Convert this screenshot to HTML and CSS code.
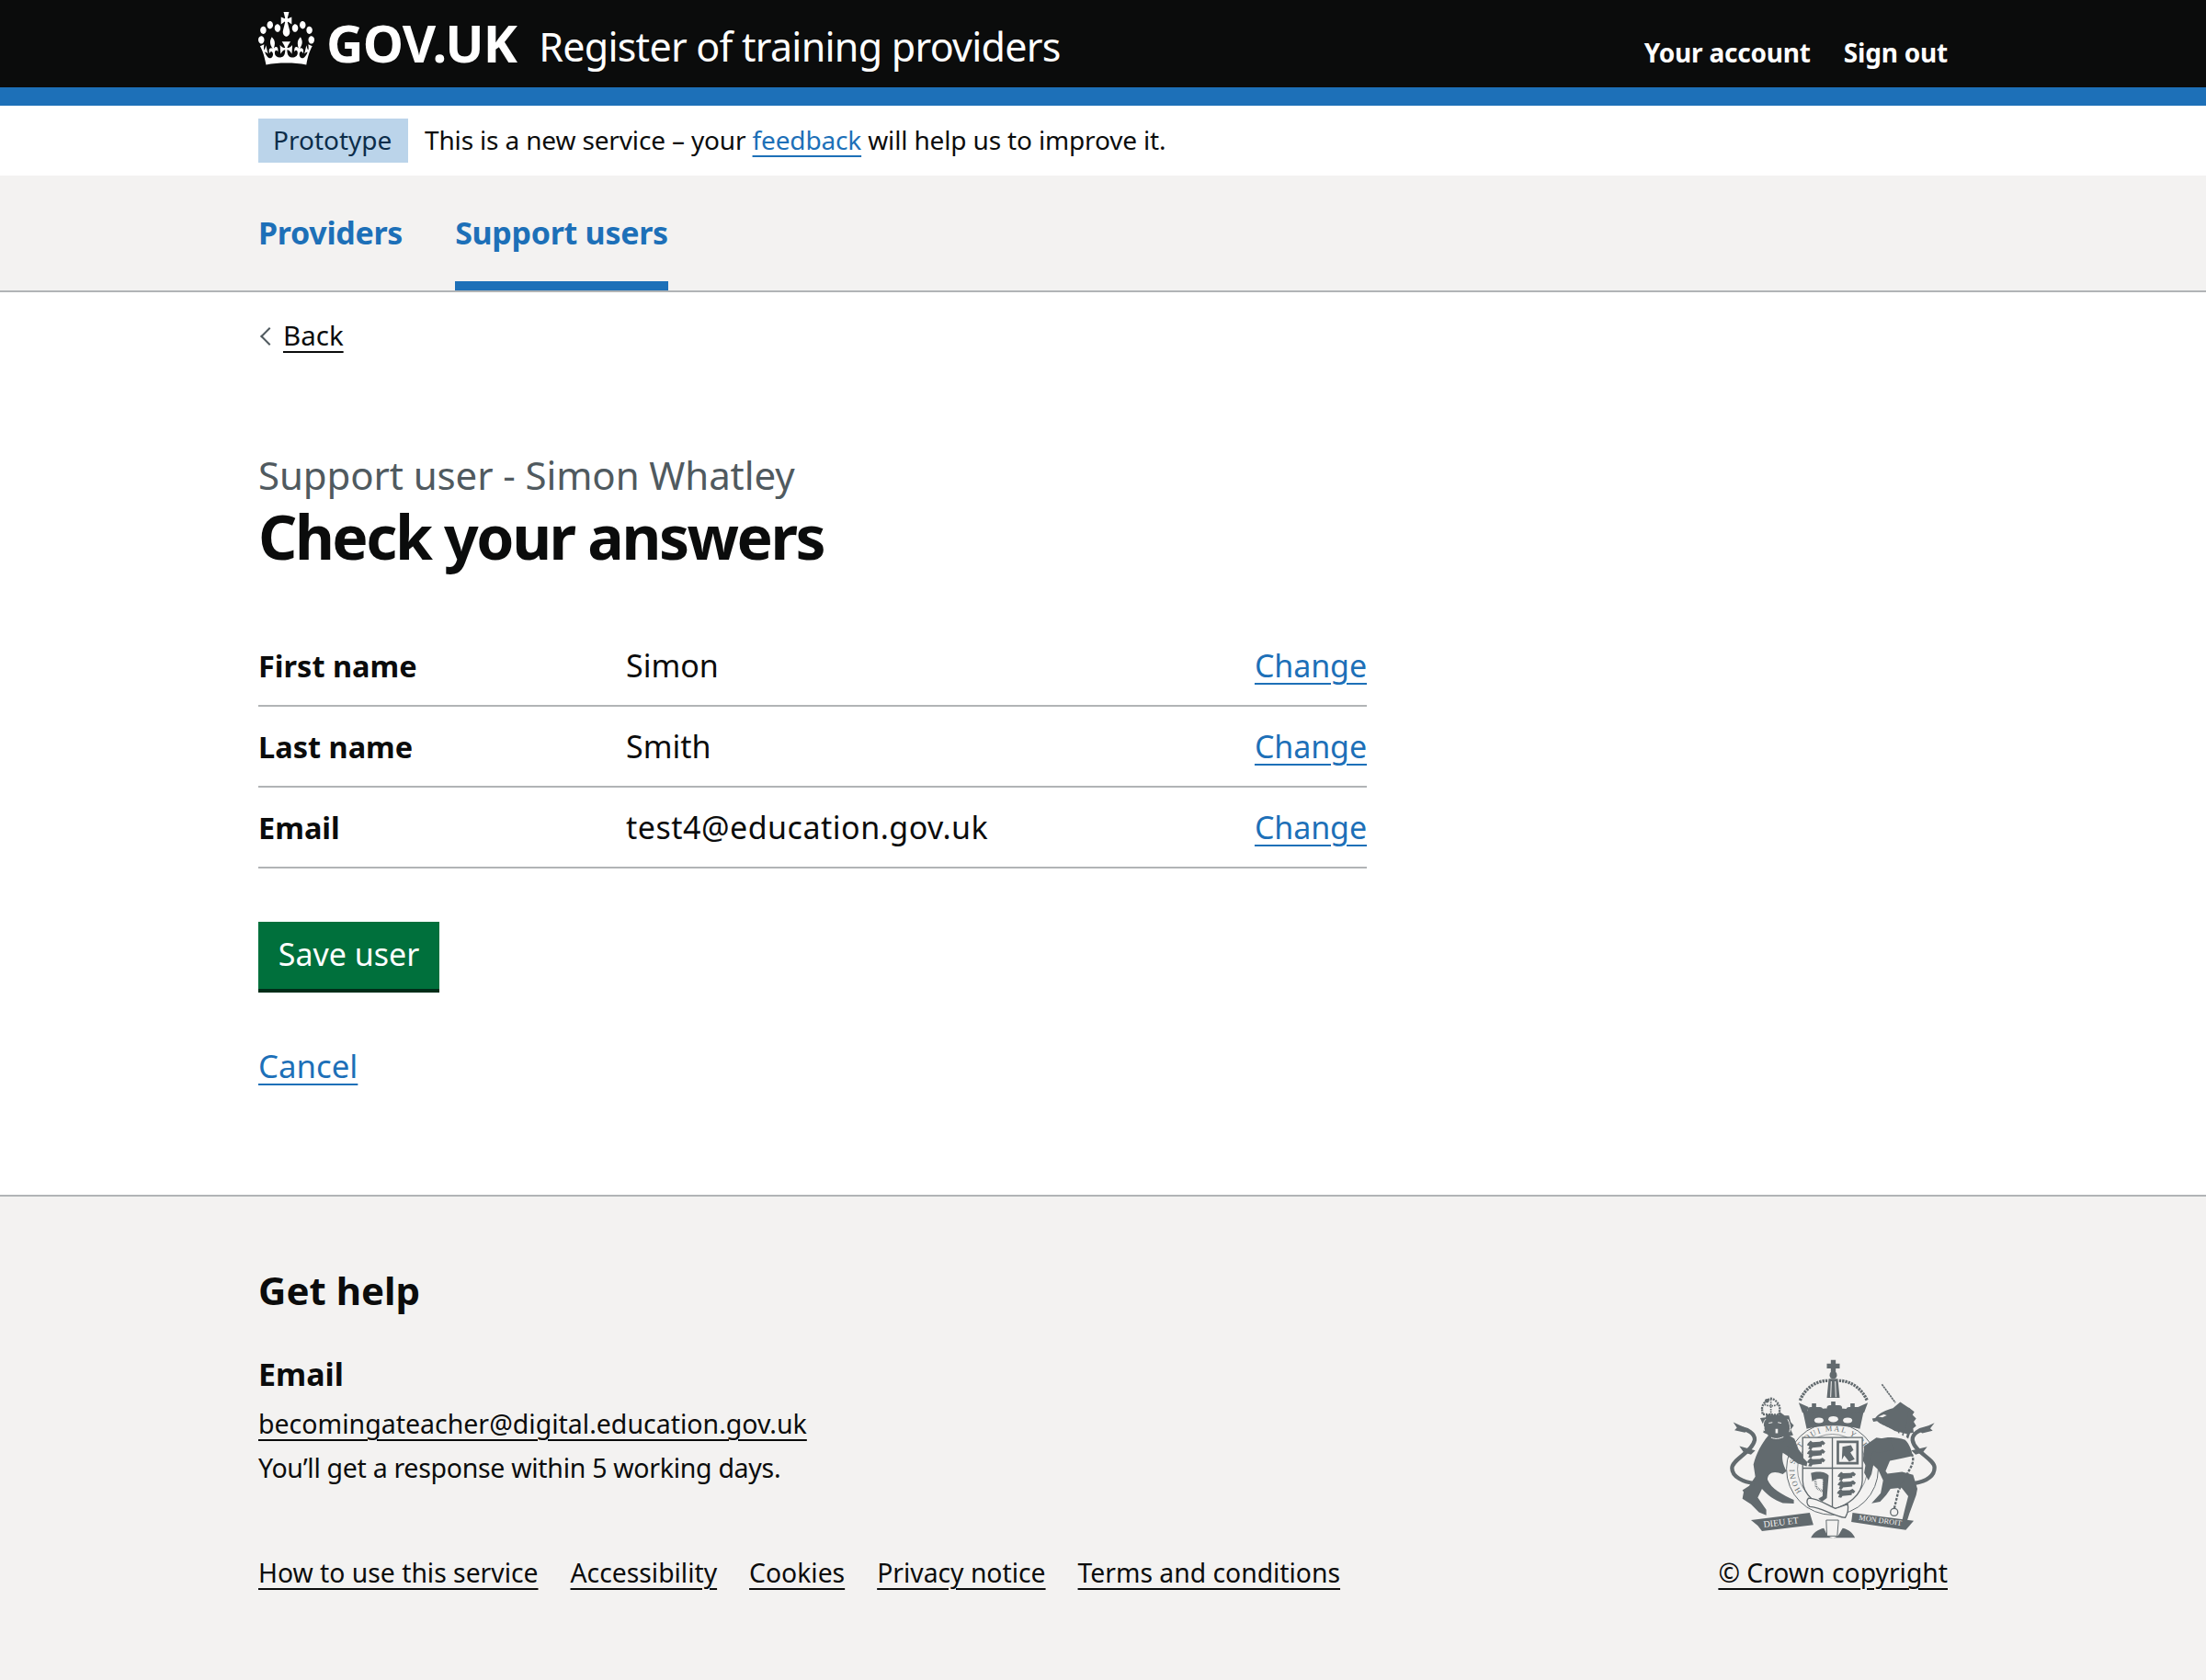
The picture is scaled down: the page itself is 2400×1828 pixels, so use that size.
FILE: index.html
```html
<!DOCTYPE html>
<html lang="en">
<head>
<meta charset="utf-8">
<title>Check your answers - Register of training providers</title>
<link rel="stylesheet" href="styles.css">
</head>
<body>
<header class="header">
  <div class="wrap header-row">
    <a class="logo" href="#">
      <svg class="crown" viewBox="0 0 132 97" preserveAspectRatio="none" aria-hidden="true"><path fill="currentColor" fill-rule="evenodd" d="M25 30.2c3.5 1.5 7.7-.2 9.1-3.7 1.5-3.6-.2-7.8-3.9-9.2-3.6-1.4-7.6.3-9.1 3.9-1.4 3.5.3 7.5 3.9 9zM9 39.5c3.6 1.5 7.8-.2 9.2-3.7 1.5-3.6-.2-7.8-3.9-9.1-3.6-1.5-7.6.2-9.1 3.8-1.4 3.5.3 7.5 3.8 9zM4.4 57.2c3.5 1.5 7.7-.2 9.1-3.8 1.5-3.6-.2-7.7-3.9-9.1-3.5-1.5-7.6.3-9.1 3.8-1.4 3.5.3 7.6 3.9 9.1zm38.3-21.4c3.5 1.5 7.7-.2 9.1-3.8 1.5-3.6-.2-7.7-3.9-9.1-3.6-1.5-7.6.3-9.1 3.8-1.3 3.6.4 7.7 3.9 9.1zm64.4-5.6c-3.6 1.5-7.8-.2-9.1-3.7-1.5-3.6.2-7.8 3.8-9.2 3.6-1.4 7.7.3 9.2 3.9 1.3 3.5-.4 7.5-3.9 9zm15.9 9.3c-3.6 1.5-7.7-.2-9.1-3.7-1.5-3.6.2-7.8 3.7-9.1 3.6-1.5 7.7.2 9.2 3.8 1.5 3.5-.3 7.5-3.8 9zm4.7 17.7c-3.6 1.5-7.8-.2-9.2-3.8-1.5-3.6.2-7.7 3.9-9.1 3.6-1.5 7.7.3 9.2 3.8 1.3 3.5-.4 7.6-3.9 9.1zM89.3 35.8c-3.6 1.5-7.8-.2-9.2-3.8-1.4-3.6.2-7.7 3.9-9.1 3.6-1.5 7.7.3 9.2 3.8 1.4 3.6-.3 7.7-3.9 9.1zM69.7 17.7l8.9 4.7V9.3l-8.9 2.8c-.2-.3-.5-.6-.9-.9L72.4 0H59.6l3.6 11.2c-.3.3-.6.5-.9.9l-8.8-2.8v13.1l8.8-4.7c.3.3.6.7.9.9l-5 15.4v.1c-.2.8-.4 1.6-.4 2.4 0 4.1 3.1 7.5 7 8.1h.2c.3 0 .7.1 1 .1.4 0 .7 0 1-.1h.2c4-.6 7.1-4.1 7.1-8.1 0-.8-.1-1.7-.4-2.4V34l-5.1-15.4c.4-.2.7-.6 1-.9zM66 92.8c16.9 0 32.8 1.1 47.1 3.2 4-16.9 8.9-26.7 14-33.5l-9.6-3.4c1 4.9 1.1 7.2 0 10.2-1.5-1.4-3-4.3-4.2-8.7L108.6 76c2.8-2 5-3.2 7.5-3.3-4.4 9.4-10 11.9-13.6 11.2-4.3-.8-6.3-4.6-5.6-7.9 1-4.7 5.7-5.9 8-.5 4.3-8.7-3-11.4-7.6-8.8 7.1-7.2 7.9-13.5 2.1-21.1-8 6.1-8.1 12.3-4.5 20.8-4.7-5.4-12.1-2.5-9.5 6.2 3.4-5.2 7.9-2 7.2 3.1-.6 4.3-6.4 7.8-13.5 7.2-10.3-.9-10.9-8-11.2-13.8 2.5-.5 7.1 1.8 11 7.3L80.2 60c-4.1 4.4-8 5.3-12.3 5.4 1.4-4.4 8-11.6 8-11.6H55.5s6.4 7.2 7.9 11.6c-4.2-.1-8-1-12.3-5.4l1.4 16.4c3.9-5.5 8.5-7.7 10.9-7.3-.3 5.8-.9 12.8-11.1 13.8-7.2.6-12.9-2.9-13.5-7.2-.7-5 3.8-8.3 7.1-3.1 2.7-8.7-4.6-11.6-9.4-6.2 3.7-8.5 3.6-14.7-4.6-20.8-5.8 7.6-5 13.9 2.2 21.1-4.7-2.6-11.9.1-7.7 8.8 2.3-5.5 7.1-4.2 8.1.5.7 3.3-1.3 7.1-5.7 7.9-3.5.7-9-1.8-13.5-11.2 2.5.1 4.7 1.3 7.5 3.3l-4.7-15.4c-1.2 4.4-2.7 7.2-4.3 8.7-1.1-3-.9-5.3 0-10.2l-9.5 3.4c5 6.9 9.9 16.7 14 33.5 14.8-2.1 30.8-3.2 47.7-3.2z"/></svg>
      <span class="logo-text">GOV.UK</span>
    </a>
    <a class="service" href="#">Register of training providers</a>
    <nav class="account">
      <a href="#">Your account</a>
      <a href="#">Sign out</a>
    </nav>
  </div>
</header>
<div class="stripe"></div>
<div class="wrap phase">
  <strong class="tag">Prototype</strong>
  <span class="phase-text">This is a new service – your <a class="link" href="#">feedback</a> will help us to improve it.</span>
</div>
<nav class="primary">
  <div class="wrap primary-row">
    <a class="primary-item" href="#">Providers</a>
    <a class="primary-item is-current" href="#">Support users</a>
  </div>
</nav>
<main class="wrap main">
  <a class="back" href="#">Back</a>
  <span class="caption">Support user - Simon Whatley</span>
  <h1 class="title">Check your answers</h1>
  <dl class="summary">
    <div class="summary-row"><dt>First name</dt><dd>Simon</dd><dd class="summary-action"><a class="link" href="#">Change</a></dd></div>
    <div class="summary-row"><dt>Last name</dt><dd>Smith</dd><dd class="summary-action"><a class="link" href="#">Change</a></dd></div>
    <div class="summary-row"><dt>Email</dt><dd class="summary-email">test4@education.gov.uk</dd><dd class="summary-action"><a class="link" href="#">Change</a></dd></div>
  </dl>
  <button class="button" type="button">Save user</button>
  <p class="cancel"><a class="link" href="#">Cancel</a></p>
</main>
<footer class="footer">
  <div class="wrap">
    <h2 class="help-title">Get help</h2>
    <div class="footer-row">
      <div class="footer-left">
        <h3 class="help-label">Email</h3>
        <p class="help-line"><a class="flink" href="#">becomingateacher@digital.education.gov.uk</a></p>
        <p class="help-line help-note">You’ll get a response within 5 working days.</p>
        <ul class="footer-links">
          <li><a class="flink" href="#">How to use this service</a></li>
          <li><a class="flink" href="#">Accessibility</a></li>
          <li><a class="flink" href="#">Cookies</a></li>
          <li><a class="flink" href="#">Privacy notice</a></li>
          <li><a class="flink" href="#">Terms and conditions</a></li>
        </ul>
      </div>
      <div class="footer-right">
        <svg class="arms" viewBox="125 50 680 595" aria-hidden="true">
          <defs>
            <path id="garter" d="M362 488 A124 124 0 1 1 562 488"/>
            <path id="passant" d="M0 9l9-9 6 5 24-1 9-4 9 8-6 7-5-2-1 7-30 3-4 6-10-2 4-9-8-3z"/>
            <path id="fleur" d="M-7-38h14v12h12c6 0 10 4 10 9s-5 9-10 8l-10-2 4 14H-5l4-14-10 2c-5 1-10-3-10-8s4-9 10-9h4z"/>
          </defs>
          <!-- garter -->
          <circle cx="462" cy="415" r="150" fill="#f3f2f1" stroke="#626a6e" stroke-width="3"/>
          <circle cx="462" cy="415" r="114" fill="none" stroke="#626a6e" stroke-width="2"/>
          <text class="arms-garter"><textPath href="#garter">HONI SOIT QUI MAL Y PENSE</textPath></text>
          <g fill="#626a6e">
            <!-- royal crown -->
            <path d="M457 58h16v12h13v16h-13v14h-16V86h-13V70h13z"/>
            <circle cx="465" cy="108" r="12"/>
            <path d="M450 120h30l6 62h-42z"/>
            <path d="M366 228c60-16 138-16 198 0l-12 56c-50-14-124-14-174 0z"/>
            <use href="#fleur" x="465" y="232"/>
            <use href="#fleur" x="402" y="238"/>
            <use href="#fleur" x="528" y="238"/>
            <path d="M352 198l32 14-6 22-14-4zM578 198l-32 14 6 22 14-4z"/>
            <!-- lion body -->
            <path d="M252 306c38-6 68-6 86 10l14 36 28 34-2 18-28-8-28-20-22-14c-4 18 0 38 12 60l-12 10c-30-14-50-4-50 18 12 30 50 50 86 66v12l-36-2c-30-10-50-26-68-46l-14 28 28 40v18l-24-10-26-26-28-18 4-22-4-6 22-14 20-30-6-40c10-40 28-70 48-94z"/>
            <!-- lion mane -->
            <path d="M232 262l-6-14 18-2 4-14 22 4 20-8 16 12h14l6 22 10 10-10 14 8 18-18 6-16 18-20-16-18 8-12-18-14-6 4-18z"/>
            <!-- unicorn head and neck -->
            <path d="M604 246c11-14 34-24 56-30l24-20 12 8 18 12 6 34-8 36-12 24-46-26-36-18-10-8-12 2-4-10 10-2z"/>
            <path d="M712 214l18 14-6 10 12 12-8 10 8 14-10 8 2 14-12 2-6 18-12-10z"/>
            <!-- unicorn body -->
            <path d="M590 335c20-25 70-30 110-15 14 14 22 34 24 52l-34 8-40 8-14 34 6 8 48-6 36 10 14 46-4 20-22 60-10 32h-16l10-42 12-46-22-28-36 4-14 20-20 22-28 5 30-33 8-42-16-35-16-15-6 30-10 20-14-25 6-35z"/>
            <!-- ribbons -->
            <path d="M196 582l192-24 12 40-168 20-14-18z"/>
            <path d="M528 558l200 26-26 30-178-26z"/>
            <path d="M392 640c6-16 24-28 42-32 6 8 8 30 30 32 22-2 24-24 32-32 18 4 34 16 40 32z"/>
          </g>
          <!-- crown details and lion face -->
          <g fill="#f3f2f1">
            <ellipse cx="418" cy="256" rx="15" ry="9"/><ellipse cx="465" cy="252" rx="16" ry="10"/><ellipse cx="512" cy="256" rx="15" ry="9"/>
            <path d="M457 128h3l-2 52h-3zM470 128h3l2 52h-3z"/>
            <path d="M254 263l12-2v3l-12 2zM284 261l11 2v3l-11-2zM276 284h8v14h-8z"/>
            <path d="M612 244l18-8 10 3-14 7z"/>
          </g>
          <!-- mane lines -->
          <path d="M240 290c-6-20-4-30 4-38M316 252c8 14 10 28 6 42M262 312c14 6 26 4 40-2" fill="none" stroke="#f3f2f1" stroke-width="3"/>
          <!-- crown arches and lion crown -->
          <path d="M446 126c-36 0-74 24-90 66M484 126c36 0 74 24 92 66" fill="none" stroke="#626a6e" stroke-width="10" stroke-dasharray="7 3"/>
          <path d="M232 218c0-14 14-30 30-34 16 4 28 20 28 34l-2 20-54-2z" fill="#f3f2f1" stroke="#626a6e" stroke-width="7" stroke-dasharray="6 3"/>
          <path d="M261 186v50M240 204c14 6 28 6 44 0" fill="none" stroke="#626a6e" stroke-width="5" stroke-dasharray="5 3"/>
          <circle cx="248" cy="192" r="7" fill="#626a6e"/>
          <!-- unicorn collar and horn -->
          <path d="M612 270l50 26 44 10" fill="none" stroke="#f3f2f1" stroke-width="12" stroke-dasharray="10 5"/>
          <path d="M624 138l44 60" fill="none" stroke="#626a6e" stroke-width="5" stroke-dasharray="7 2"/>
          <!-- tails -->
          <path d="M208 462c-38-4-74-22-74-50 0-28 66-52 74-92 2-20-23-35-48-40" fill="none" stroke="#626a6e" stroke-width="13"/>
          <path d="M138 262l52 24-14 10-34-8 8-8zM158 340l52 14-14 14-24-8z" fill="#626a6e"/>
          <path d="M728 462c42-7 68-22 68-52 0-28-66-50-72-90-2-20 24-35 51-40" fill="none" stroke="#626a6e" stroke-width="13"/>
          <path d="M796 264l-54 24 14 10 34-8-8-8zM772 342l-52 12 14 14 24-8z" fill="#626a6e"/>
          <!-- shield -->
          <path d="M365 312h195v140c0 50-50 82-98 96-48-14-97-46-97-96z" fill="#f3f2f1" stroke="#626a6e" stroke-width="4"/>
          <path d="M462 312v234M365 412h195" stroke="#626a6e" stroke-width="4" fill="none"/>
          <g fill="#626a6e">
            <use href="#passant" x="382" y="322"/>
            <use href="#passant" x="382" y="350"/>
            <use href="#passant" x="382" y="378"/>
            <path d="M476 322h72v78h-72zM484 330v62h56v-62z" fill-rule="evenodd"/>
            <path d="M495 342l28-5 8 16-10 8 14 22-18 8-16-20-8 14z"/>
            <use href="#passant" x="482" y="424"/>
            <use href="#passant" x="482" y="452"/>
            <use href="#passant" x="480" y="480"/>
            <path d="M392 428c22-8 50-4 58 8l-6 74-16 12-12-10 14-8 2-56c-14-4-28 0-36 8z"/>
          </g>
          <path d="M404 442l30-6v54l-24-14z" fill="none" stroke="#626a6e" stroke-width="8" stroke-dasharray="2 3"/>
          <!-- lion paw and unicorn hoof over the shield -->
          <path fill="#626a6e" d="M316 340l34 22 30 30-2 14-30-10-30-22z"/>
          <path fill="#626a6e" d="M566 340l40-28 46 8 10 30-40 12-28-4-10 30-8 24-14-24z"/>
          <!-- chain -->
          <path d="M700 352c24 4 34 30 18 58l-40 76-14 60" fill="none" stroke="#626a6e" stroke-width="7" stroke-dasharray="9 4"/>
          <circle cx="664" cy="556" r="12" fill="none" stroke="#626a6e" stroke-width="4"/>
          <!-- scroll -->
          <path d="M384 510c30 0 60 22 88 34l40-14c4 16 0 30-8 44-44-6-74-34-116-36-10-6-12-20-4-28z" fill="#f3f2f1" stroke="#626a6e" stroke-width="4"/>
          <path d="M442 582h40l-4 52h-34z" fill="#f3f2f1" stroke="#626a6e" stroke-width="3"/>
          <text class="arms-motto" transform="translate(238 606) rotate(-7)">DIEU ET</text>
          <text class="arms-motto arms-motto-small" transform="translate(548 581) rotate(8)">MON DROIT</text>
        </svg>
        <a class="flink" href="#">© Crown copyright</a>
      </div>
    </div>
  </div>
</footer>
</body>
</html>
```

FILE: styles.css
```css
* { box-sizing: border-box; }
html, body { margin: 0; padding: 0; }
body { font-family: "Noto Sans", "Liberation Sans", sans-serif; font-size: 29px; color: #0b0c0c; background: #fff; }
a { color: inherit; }
.wrap { width: 1838px; margin-left: 281px; }

.header { background: #0b0c0c; color: #fff; height: 95px; }
.header-row { display: flex; align-items: flex-start; height: 95px; }
.logo { display: flex; text-decoration: none; padding-top: 13px; }
.crown { width: 61px; height: 58px; display: block; }
.logo-text { font-weight: 700; font-size: 56px; line-height: 66px; margin-left: 13px; letter-spacing: -.8px; }
.service { font-size: 43px; line-height: 60px; margin: 21px 0 0 24px; text-decoration: none; letter-spacing: -.75px; }
.account { margin-left: auto; display: flex; gap: 36px; padding-top: 36px; font-size: 28px; line-height: 42px; font-weight: 700; letter-spacing: -.2px; }
.account a { text-decoration: none; }
.stripe { height: 20px; background: #1d70b8; }

.phase { display: flex; align-items: center; gap: 18px; height: 76px; font-size: 28px; }
.phase-text { letter-spacing: -.15px; position: relative; top: -1px; }
.tag { background: #bbd4ea; color: #0c2d4a; font-weight: 400; padding: 0 16px; line-height: 46px; height: 48px; width: 163px; white-space: nowrap; }
.link { color: #1d70b8; text-underline-offset: 6px; text-decoration-thickness: 2px; }

.primary { background: #f3f2f1; border-bottom: 2px solid #b1b4b6; height: 127px; }
.primary-row { display: flex; gap: 57px; height: 125px; }
.primary-item { font-weight: 700; font-size: 34px; color: #1d70b8; text-decoration: none; padding-top: 39px; line-height: 46px; letter-spacing: -.3px; }
.is-current { border-bottom: 10px solid #1d70b8; }

.main { height: 982px; padding-top: 27px; }
.back { display: inline-block; position: relative; margin-left: 27px; line-height: 40px; font-size: 29.5px; text-underline-offset: 6px; text-decoration-thickness: 2px; }
.back::before { content: ""; position: absolute; left: -22px; top: 14px; width: 12px; height: 12px; border-left: 2px solid #505a5f; border-bottom: 2px solid #505a5f; transform: rotate(45deg); }
.caption { display: block; color: #505a5f; font-size: 42px; line-height: 52px; margin-top: 106px; letter-spacing: -.1px; }
.title { font-size: 66px; font-weight: 700; line-height: 80px; margin: 0; letter-spacing: -2.45px; }

.summary { width: 1206px; margin: 58px 0 0; font-size: 34px; }
.summary-row { display: flex; height: 88px; align-items: center; border-bottom: 2px solid #b1b4b6; }
.summary-row dt { width: 400px; font-weight: 700; font-size: 32.5px; }
.summary-row dd { margin: 0; flex: 1; }
.summary-row .summary-action { flex: none; text-align: right; letter-spacing: -.1px; }
.summary-row .summary-email { letter-spacing: .5px; }

.button { display: block; margin-top: 58px; height: 77px; width: 197px; padding: 0 0 4px; background: #00703c; color: #fff; border: 0; border-bottom: 4px solid #002d18; font: inherit; font-size: 34px; }
.cancel { margin: 56px 0 0; line-height: 48px; font-size: 34.8px; }

.footer { background: #f3f2f1; border-top: 2px solid #b1b4b6; height: 528px; font-size: 28.5px; }
.help-title { font-size: 42px; font-weight: 700; line-height: 56px; margin: 0; padding-top: 74px; box-sizing: content-box; }
.footer-row { display: flex; justify-content: space-between; align-items: flex-end; }
.help-label { font-size: 34px; font-weight: 700; line-height: 44px; margin: 41px 0 0; }
.help-line { margin: 0; line-height: 48px; }
.help-label + .help-line { margin-top: 8px; }
.help-note { letter-spacing: -.3px; }
.flink { text-underline-offset: 6px; text-decoration-thickness: 2px; }
.footer-links { list-style: none; margin: 66px 0 0; padding: 0; display: flex; gap: 35px; line-height: 48px; font-size: 28.3px; }
.footer-right { display: flex; flex-direction: column; align-items: center; line-height: 48px; font-size: 28.3px; }
.arms { width: 227px; height: 198px; display: block; margin-bottom: 12px; }
.arms-garter { font-size: 25px; fill: #626a6e; letter-spacing: 5px; font-family: "Liberation Serif", serif; }
.arms-motto { font-size: 30px; fill: #f3f2f1; font-family: "Liberation Serif", serif; }
.arms-motto-small { font-size: 25px; }
```
